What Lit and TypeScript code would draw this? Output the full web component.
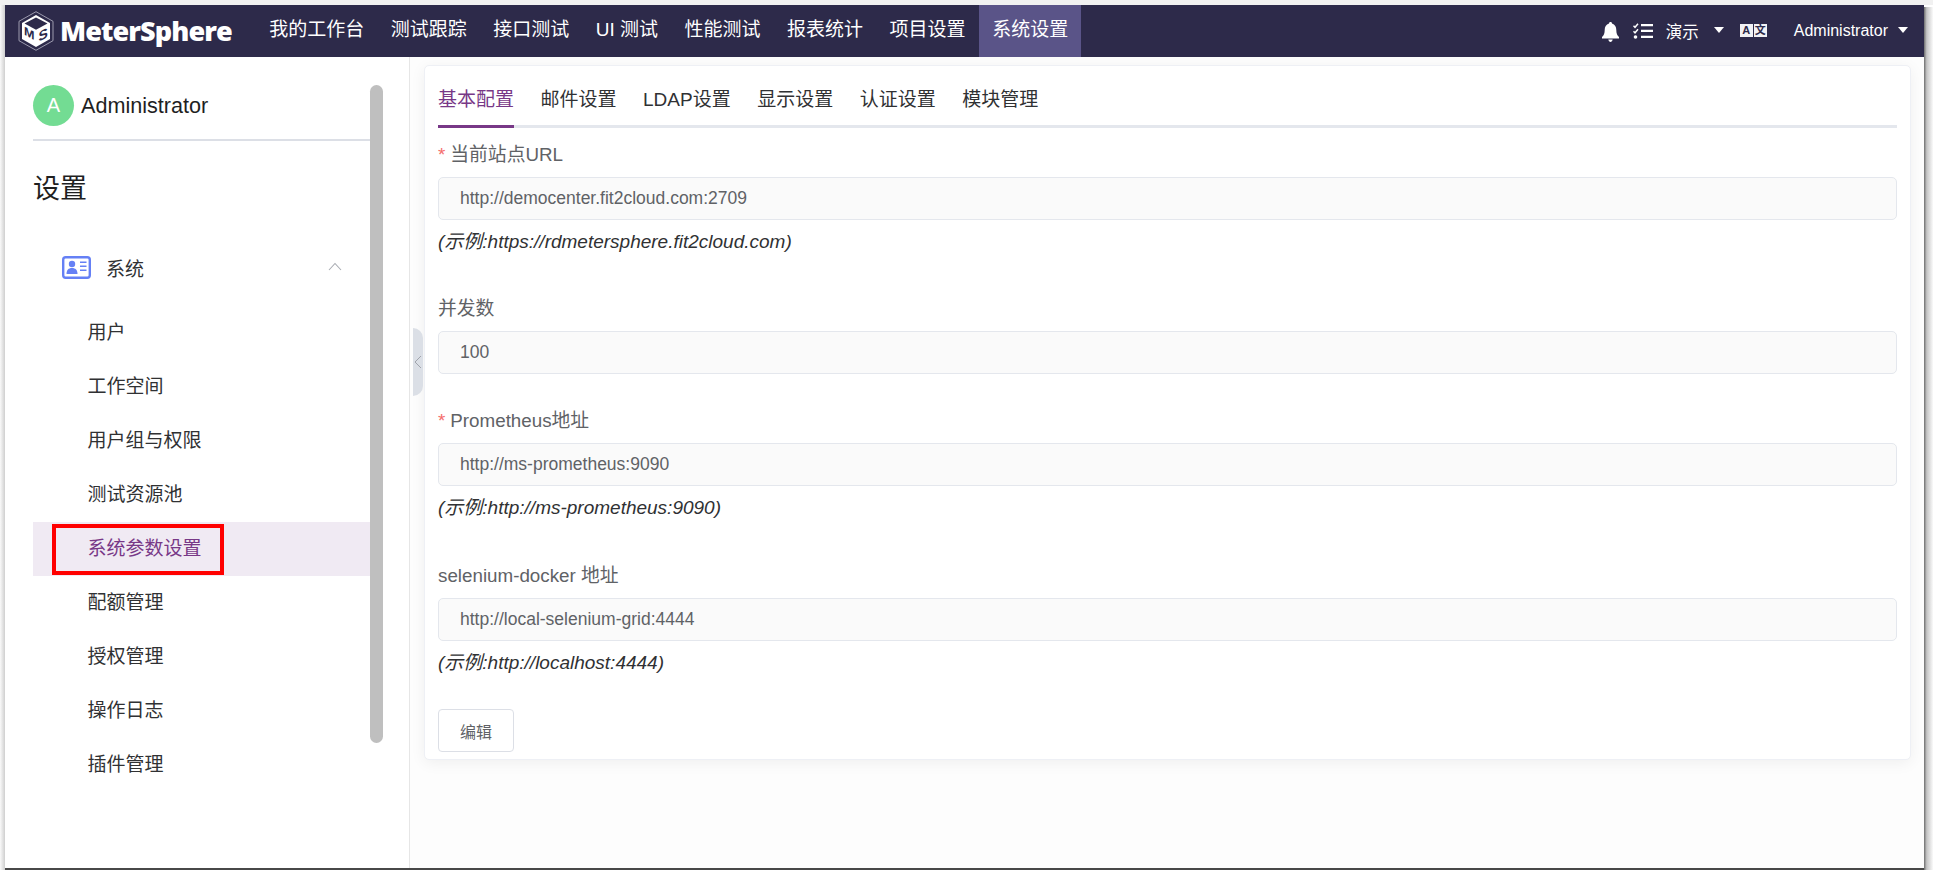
import { LitElement, html, css, svg } from "lit";
import { customElement } from "lit/decorators.js";

const NAV = ["我的工作台", "测试跟踪", "接口测试", "UI 测试", "性能测试", "报表统计", "项目设置", "系统设置"];
const MENU = ["用户", "工作空间", "用户组与权限", "测试资源池", "系统参数设置", "配额管理", "授权管理", "操作日志", "插件管理"];
const TABS = ["基本配置", "邮件设置", "LDAP设置", "显示设置", "认证设置", "模块管理"];
const FIELDS = [
  { label: "当前站点URL", required: true, value: "http://democenter.fit2cloud.com:2709", hint: "(示例:https://rdmetersphere.fit2cloud.com)" },
  { label: "并发数", required: false, value: "100", hint: "" },
  { label: "Prometheus地址", required: true, value: "http://ms-prometheus:9090", hint: "(示例:http://ms-prometheus:9090)" },
  { label: "selenium-docker 地址", required: false, value: "http://local-selenium-grid:4444", hint: "(示例:http://localhost:4444)" },
];

const logo = svg`<svg class="logo" width="36" height="40" viewBox="0 0 36 40">
  <path d="M18 .7 35 10.3V29.7L18 39.3 1 29.7V10.3Z" fill="none" stroke="#b9b7c8" stroke-width=".8"/>
  <path d="M18 4 32 12V28L18 36 4 28V12Z" fill="#fff"/>
  <path d="M18 6.500 29.500 12.600 18 18.800 6.500 12.600Z" fill="#2d2a4a"/>
  <text transform="matrix(1 .55 0 1 6 23.500)" font-family="Liberation Sans" font-weight="700" font-size="12" textLength="10.500" lengthAdjust="spacingAndGlyphs" fill="#2d2a4a">M</text>
  <text transform="matrix(1 -.55 0 1 20.500 31)" font-family="Liberation Sans" font-weight="700" font-size="14" fill="#2d2a4a">S</text>
</svg>`;

const bell = svg`<svg class="bell" width="17" height="20" viewBox="0 0 17 20"><path fill="#fff" d="M8.500 0C9.500 0 10 .7 10 1.600 13 2.400 14.300 5 14.300 8c0 3.600.9 5.200 2.700 7v1.400H0V15c1.800-1.800 2.700-3.400 2.700-7 0-3 1.300-5.600 4.300-6.400C7 .7 7.500 0 8.500 0ZM6.300 17.500h4.400C10.400 19 9.500 20 8.500 20s-1.900-1-2.200-2.500Z"/></svg>`;

const checklist = svg`<svg width="20" height="16" viewBox="0 0 20 16">
  <path d="M.5 2.800 2 4.300 5 .8M.5 8.300 2 9.800 5 6.300" fill="none" stroke="#fff" stroke-width="1.500"/>
  <circle cx="2.500" cy="14" r="1.800" fill="#fff"/>
  <path d="M8 1h12v2.300H8zM8 6.800h12v2.300H8zM8 12.700h12V15H8z" fill="#fff"/>
</svg>`;

const card = svg`<svg width="29" height="23" viewBox="0 0 29 23">
  <rect x="1.200" y="1.200" width="26.600" height="20.600" rx="2.500" fill="#fff" stroke="#6580f5" stroke-width="2.400"/>
  <circle cx="10" cy="8" r="3.200" fill="#6580f5"/>
  <path d="M4.500 18c0-4 2-6 5.500-6s5.500 2 5.500 6Z" fill="#6580f5"/>
  <path d="M18 6.200h6.500M18 10.200h6.500M18 14.200h6.500" stroke="#6580f5" stroke-width="1.600"/>
</svg>`;

@customElement("app-root")
export class AppRoot extends LitElement {
  static styles = css`
    :host {
      display: block;
      width: 1933px;
      height: 877px;
      font-family: "Liberation Sans", "Noto Sans CJK SC", sans-serif;
      background: #fff;
      overflow: hidden;
    }
    * {
      box-sizing: border-box;
    }
    .frame {
      height: 877px;
      padding: 5px 9px 7px 5px;
      position: relative;
      background: linear-gradient(#f1f1f1, #f1f1f1) top / 100% 5px no-repeat, #fff;
    }
    .shade-left,
    .shade-right,
    .shade-bottom {
      position: absolute;
    }
    .shade-left {
      left: 0;
      top: 5px;
      bottom: 7px;
      width: 5px;
      background: linear-gradient(90deg, #fafafa, #cfcfcf);
    }
    .shade-right {
      right: 0;
      top: 7px;
      bottom: 7px;
      width: 9px;
      background: linear-gradient(90deg, #6e6e6e, #c4c4c4 30%, #fafafa);
    }
    .shade-bottom {
      left: 5px;
      right: 9px;
      bottom: 7px;
      height: 2px;
      background: #484848;
    }
    .app {
      height: 863px;
      display: flex;
      flex-direction: column;
      background: #fff;
    }
    header {
      height: 52px;
      flex: none;
      background: #2d2a4a;
      color: #fff;
      display: flex;
      align-items: center;
    }
    .brand {
      display: flex;
      align-items: center;
      width: 251px;
      padding-left: 13px;
      flex: none;
    }
    .logo {
      flex: none;
    }
    .brand-name {
      font-family: "Open Sans", sans-serif;
      font-weight: 800;
      font-size: 27px;
      line-height: 40px;
      margin-left: 6px;
      white-space: nowrap;
      letter-spacing: -0.9px;
    }
    nav {
      display: flex;
      height: 100%;
    }
    .nav-item {
      padding: 0 13.25px;
      font-size: 19px;
      line-height: 50px;
      white-space: nowrap;
    }
    .nav-item.active {
      background: #5a5488;
    }
    .tools {
      margin-left: auto;
      display: flex;
      align-items: center;
      padding-right: 16px;
      font-size: 16px;
    }
    .tools svg {
      flex: none;
      display: block;
    }
    .tools .bell {
      margin-top: 2px;
    }
    .spacer {
      width: 14px;
    }
    .project {
      margin: 0 15px 0 13px;
      font-size: 16.5px;
    }
    .caret {
      width: 0;
      height: 0;
      margin-top: -2px;
      border-left: 5.5px solid transparent;
      border-right: 5.5px solid transparent;
      border-top: 6px solid #fff;
    }
    .caret.last {
      margin-left: 10px;
    }
    .translate {
      display: flex;
      gap: 1px;
      margin: -2px 27px 0 16px;
    }
    .translate span {
      width: 13px;
      height: 13px;
      font-size: 11px;
      line-height: 13px;
      font-weight: 700;
      text-align: center;
      background: #f2f2f5;
      color: #2d2a4a;
    }
    .body {
      flex: 1;
      display: flex;
      min-height: 0;
    }
    aside {
      width: 405px;
      flex: none;
      border-right: 1px solid #e6e6e6;
      padding: 28px 39px 0 28px;
      position: relative;
    }
    .scrollbar {
      position: absolute;
      left: 365px;
      top: 28px;
      width: 13px;
      height: 658px;
      border-radius: 7px;
      background: #bfbfbf;
    }
    .user {
      display: flex;
      align-items: center;
      gap: 7px;
      height: 56px;
      padding-bottom: 13px;
      border-bottom: 2px solid #dcdfe6;
      font-size: 21.6px;
      color: #1f1f1f;
    }
    .avatar {
      width: 41px;
      height: 41px;
      border-radius: 50%;
      background: #73dc93;
      color: #fff;
      font-size: 20px;
      display: flex;
      align-items: center;
      justify-content: center;
    }
    h1 {
      margin: 0;
      font-size: 27px;
      font-weight: 400;
      line-height: 40px;
      height: 40px;
      margin-top: 28px;
      color: #1f1f1f;
    }
    .group {
      display: flex;
      align-items: center;
      height: 54px;
      margin-top: 31px;
      padding: 0 28px 0 29px;
      font-size: 19px;
      color: #303133;
    }
    .group span {
      margin-left: 15px;
    }
    .group .chevron {
      margin-left: auto;
      margin-top: -2px;
    }
    ul {
      list-style: none;
      margin: 12px 0 0;
      padding: 0;
    }
    li {
      height: 54px;
      line-height: 54px;
      padding-left: 54.5px;
      font-size: 19px;
      color: #303133;
      position: relative;
    }
    li.active {
      background: #f0eaf3;
      color: #783887;
    }
    .marker {
      position: absolute;
      left: 19px;
      top: 2px;
      width: 172px;
      height: 51px;
      border: 4px solid #f00;
    }
    .handle {
      position: absolute;
      left: 413px;
      top: 328px;
      width: 10px;
      height: 68px;
      background: #dbdfe6;
      border-radius: 0 10px 10px 0;
      display: flex;
      align-items: center;
      justify-content: center;
    }
    main {
      flex: 1;
      padding: 8px 13px 0 14px;
      background: #fdfdfd;
    }
    .card {
      height: 695px;
      background: #fff;
      border: 1px solid #eef0f5;
      border-radius: 5px;
      box-shadow: 0 3px 15px rgba(0, 0, 0, 0.06);
      padding: 0 13px;
    }
    .tabs {
      display: flex;
      gap: 26.5px;
      height: 62px;
      border-bottom: 3px solid #e4e7ed;
    }
    .tab {
      margin-top: 14px;
      height: 48px;
      line-height: 40px;
      font-size: 19px;
      color: #303133;
      white-space: nowrap;
    }
    .tab.active {
      color: #783887;
      border-bottom: 3px solid #783887;
    }
    .field {
      margin-bottom: 40px;
    }
    .field.compact {
      margin-bottom: 33px;
    }
    .tabs + .field {
      margin-top: 13px;
      margin-bottom: 39px;
    }
    label {
      display: block;
      height: 28px;
      line-height: 28px;
      font-size: 18.8px;
      color: #606266;
      margin-bottom: 8px;
      white-space: nowrap;
    }
    .req {
      color: #f56c6c;
      margin-right: 5px;
    }
    .input {
      height: 43px;
      line-height: 41px;
      border: 1px solid #e4e7ed;
      border-radius: 5px;
      background: #fafafa;
      padding-left: 21px;
      font-size: 17.5px;
      color: #606266;
    }
    .hint {
      height: 28px;
      line-height: 28px;
      margin-top: 8px;
      font-size: 19px;
      font-style: italic;
      color: #303133;
      white-space: nowrap;
    }
    button {
      display: block;
      width: 76px;
      height: 43px;
      background: #fff;
      border: 1px solid #dcdfe6;
      border-radius: 4px;
      font: inherit;
      font-size: 16px;
      color: #606266;
      padding: 0;
      margin-top: -8px;
    }
  `;

  render() {
    return html`
      <div class="frame">
        <div class="shade-left"></div>
        <div class="shade-right"></div>
        <div class="shade-bottom"></div>
        <div class="app">
          <header>
            <div class="brand">${logo}<span class="brand-name">MeterSphere</span></div>
            <nav>
              ${NAV.map((n) => html`<div class="nav-item ${n === "系统设置" ? "active" : ""}">${n}</div>`)}
            </nav>
            <div class="tools">
              ${bell}
              <span class="spacer"></span>
              ${checklist}
              <span class="project">演示</span>
              <div class="caret"></div>
              <div class="translate"><span>A</span><span>文</span></div>
              <span>Administrator</span>
              <div class="caret last"></div>
            </div>
          </header>
          <div class="body">
            <aside>
              <div class="scrollbar"></div>
              <div class="user"><div class="avatar">A</div>Administrator</div>
              <h1>设置</h1>
              <div class="group">
                ${card}
                <span>系统</span>
                <svg class="chevron" width="14" height="9" viewBox="0 0 14 9"><path d="M1 8l6-6.500L13 8" fill="none" stroke="#a8abb2" stroke-width="1.100"/></svg>
              </div>
              <ul>
                ${MENU.map(
                  (m) => html`<li class=${m === "系统参数设置" ? "active" : ""}>
                    ${m}${m === "系统参数设置" ? html`<div class="marker"></div>` : ""}
                  </li>`
                )}
              </ul>
            </aside>
            <div class="handle">
              <svg width="8" height="14" viewBox="0 0 8 14"><path d="M7 1 1 7l6 6" fill="none" stroke="#a0a4ac" stroke-width="1"/></svg>
            </div>
            <main>
              <div class="card">
                <div class="tabs">
                  ${TABS.map((t, i) => html`<div class="tab ${i === 0 ? "active" : ""}">${t}</div>`)}
                </div>
                ${FIELDS.map(
                  (f) => html`<div class="field ${f.hint ? "" : "compact"}">
                    <label>${f.required ? html`<span class="req">*</span>` : ""}${f.label}</label>
                    <div class="input">${f.value}</div>
                    ${f.hint ? html`<div class="hint">${f.hint}</div>` : ""}
                  </div>`
                )}
                <button>编辑</button>
              </div>
            </main>
          </div>
        </div>
      </div>
    `;
  }
}
